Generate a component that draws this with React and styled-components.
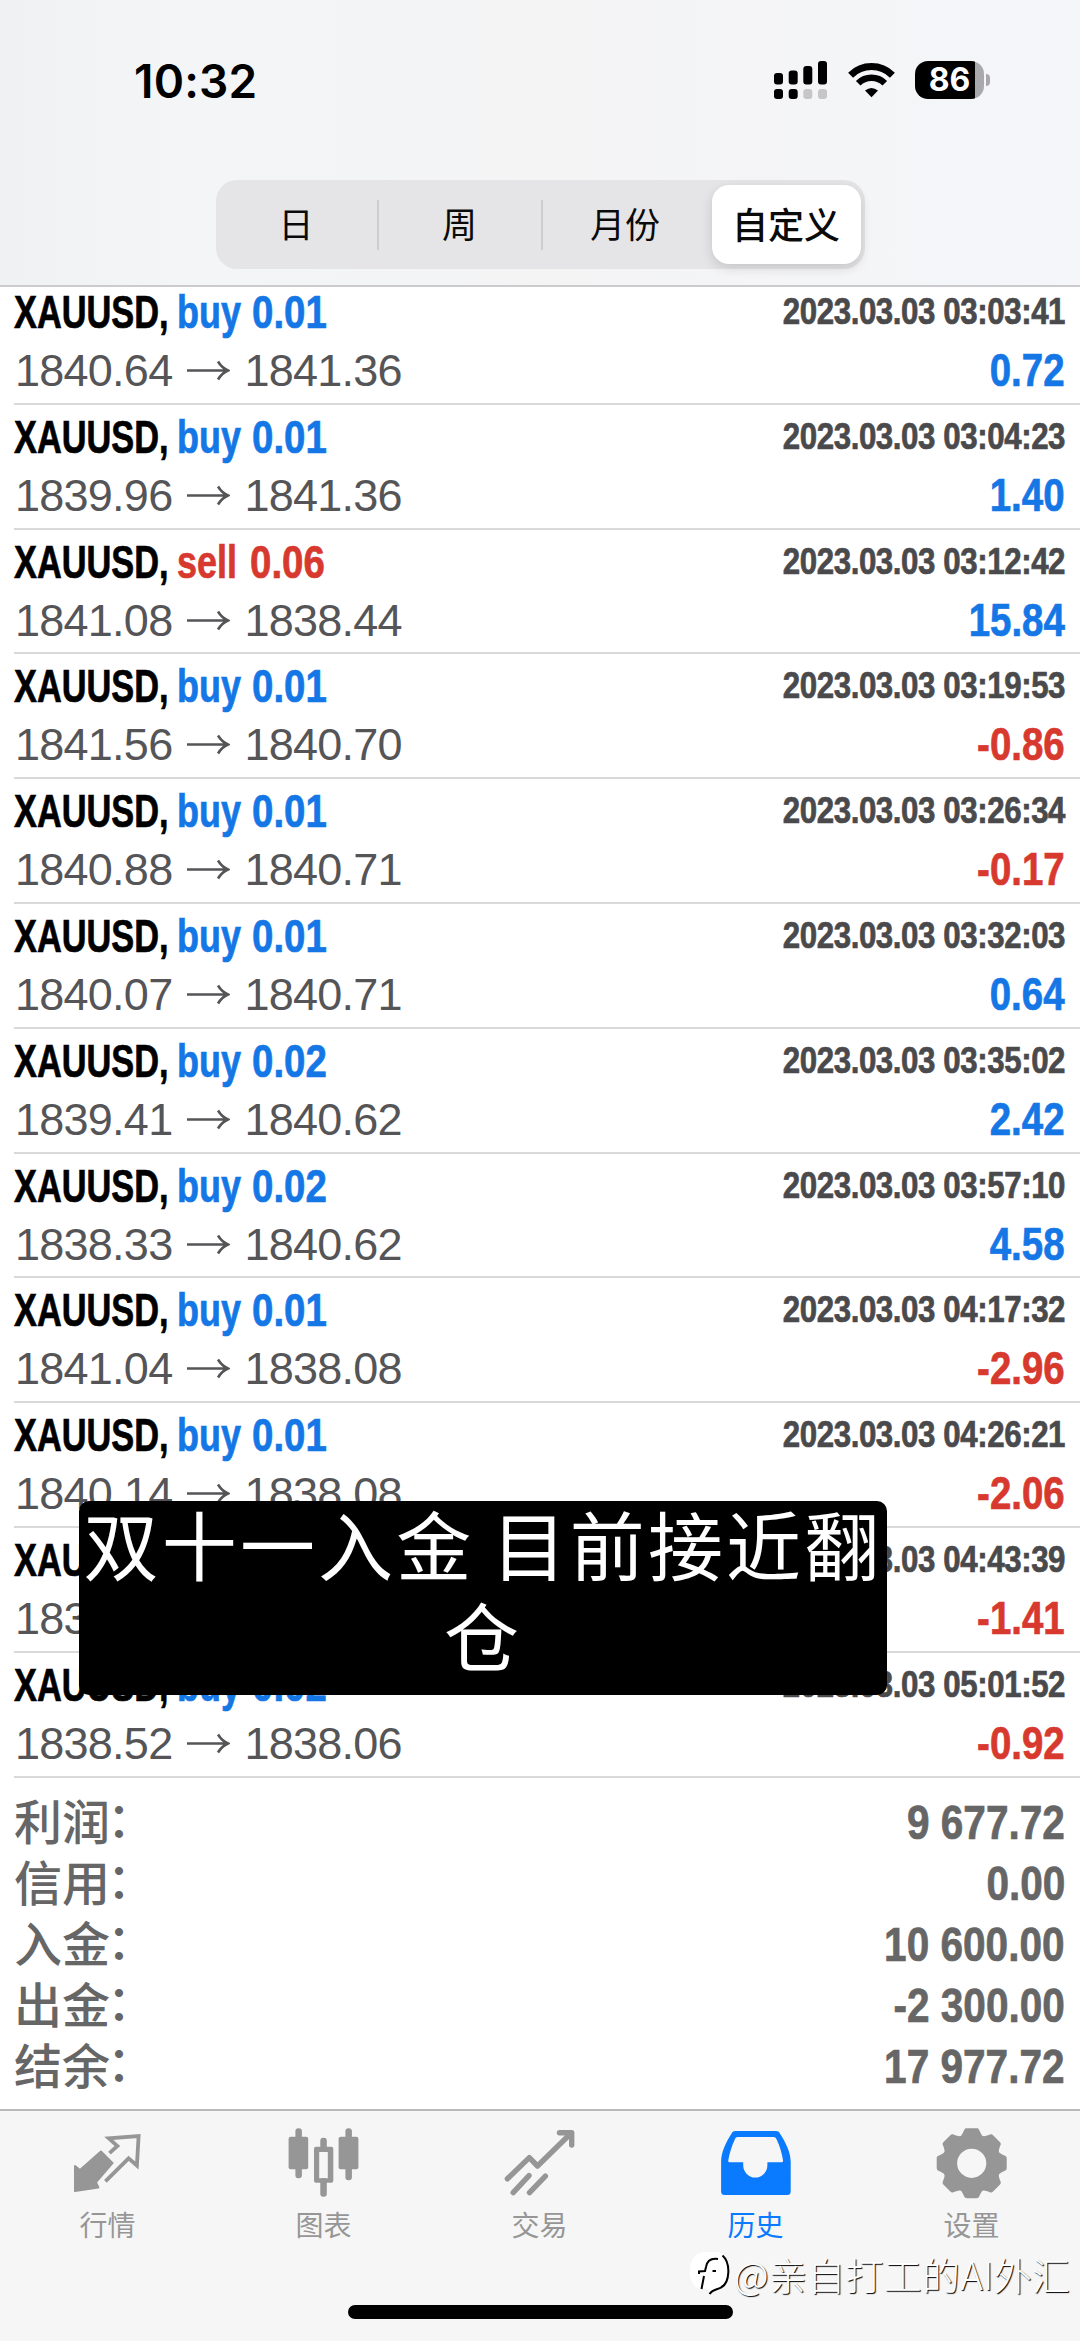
import React from "react";
import styled, { createGlobalStyle } from "styled-components";

const BLUE = "#1577e6";
const RED = "#d8392f";
const CJK = '"Noto Sans CJK SC", sans-serif';
const SANS = '"Liberation Sans", sans-serif';

const GlobalStyle = createGlobalStyle`
  * { box-sizing: border-box; }
  body { margin: 0; background: #fff; }
`;

const Screen = styled.div`
  position: relative;
  display: flex;
  flex-direction: column;
  width: 1080px;
  height: 2341px;
  overflow: hidden;
  background: #fff;
  font-family: ${SANS};
`;

const Header = styled.header`
  position: relative;
  z-index: 1;
  display: flex;
  flex-direction: column;
  align-items: center;
  flex: none;
  height: 287px;
  border-bottom: 2px solid #cbcbcd;
  background: linear-gradient(90deg, #f0f1f2 0, #f3f5f6 180px, #f4f4f5 540px, #f5f6f9 1080px);
`;

const StatusBar = styled.div`
  display: flex;
  align-items: center;
  justify-content: space-between;
  width: 100%;
  height: 180px;
  padding: 0 90px 20px 134px;
`;

const Clock = styled.span`
  padding-top: 2px;
  font: 600 46px/60px Inter, sans-serif;
  letter-spacing: 0.2px;
  color: #000;
`;

const StatusIcons = styled.div`
  display: flex;
  align-items: center;
  gap: 20px;
  height: 40px;
`;

const Battery = styled.div`
  display: flex;
  align-items: center;
  gap: 2px;
`;

const BatteryBody = styled.div`
  width: 69px;
  height: 38px;
  border-radius: 13px;
  background: linear-gradient(90deg, #000 60px, #a9a9ab 60px);
  color: #fff;
  font: 700 32px/38px Inter, sans-serif;
  text-align: center;
`;

const BatteryCap = styled.div`
  width: 4px;
  height: 12px;
  border-radius: 0 4px 4px 0;
  background: #a9a9ab;
`;

const Segments = styled.div`
  display: flex;
  align-items: center;
  width: 649px;
  height: 89px;
  border-radius: 21px;
  background: #e5e5e7;
`;

const Segment = styled.button`
  flex: 0 0 ${(p) => p.$width}px;
  height: ${(p) => (p.$active ? "79px" : "50px")};
  margin-left: ${(p) => (p.$active ? "4px" : "0")};
  padding: 0 0 4px;
  border: 0;
  border-right: ${(p) => (p.$divider ? "2px solid #cdcdd0" : "0")};
  border-radius: ${(p) => (p.$active ? "17px" : "0")};
  background: ${(p) => (p.$active ? "#fff" : "transparent")};
  box-shadow: ${(p) => (p.$active ? "0 4px 12px rgba(0,0,0,.14)" : "none")};
  color: #0a0a0a;
  font: ${(p) => (p.$active ? "500 36px/46px" : "400 35px/46px")} ${CJK};
`;

const List = styled.main`
  flex: none;
  margin-top: -7px;
`;

const Deal = styled.article`
  height: 124.8px;
  margin-left: 14px;
  padding: 3px 15px 0 0;
  border-bottom: 2px solid #d9d9db;
`;

const DealTop = styled.div`
  display: flex;
  justify-content: space-between;
  height: 60px;
  line-height: 60px;
  white-space: nowrap;
`;

const DealBottom = styled(DealTop)`
  height: 56px;
  line-height: 56px;
`;

const Condensed = styled.span`
  display: block;
  font-family: ${SANS};
  font-weight: bold;
  white-space: nowrap;
  transform: scaleX(${(p) => p.$scale || 0.845});
  transform-origin: ${(p) => (p.$right ? "right" : "left")} center;
  -webkit-text-stroke: 0.7px currentColor;
`;

const Instrument = styled.div`
  display: flex;
  font-size: 45.5px;
  line-height: 60px;
`;

const Slot = styled.div`
  width: ${(p) => p.$width}px;
  color: ${(p) => p.$color};
`;

const Time = styled(Condensed)`
  font-size: 37px;
  line-height: 58px;
  letter-spacing: -0.5px;
  color: #4a4a4c;
`;

const Prices = styled.span`
  display: flex;
  padding-left: 1px;
  font-size: 45px;
  letter-spacing: -0.75px;
  color: #555558;
`;

const Arrow = styled.svg`
  width: 44px;
  height: 56px;
  margin: 0 14px 0 14px;
`;

const Profit = styled(Condensed)`
  font-size: 45.5px;
  line-height: 56px;
  color: ${(p) => (p.$loss ? RED : BLUE)};
`;

const Summary = styled.section`
  flex: none;
  height: 331.2px;
  padding: 14.5px 15px 0 14px;
`;

const SummaryRow = styled.div`
  display: flex;
  justify-content: space-between;
  height: 61px;
  color: #666;
`;

const SummaryLabel = styled.span`
  margin-top: -3px;
  font: 500 48px/61px ${CJK};
`;

const Colon = styled.span`
  margin-left: -15px;
  font-family: "Noto Sans CJK JP", sans-serif;
`;

const SummaryValue = styled(Condensed)`
  font-size: 48px;
  line-height: 61px;
`;

const TabBar = styled.nav`
  display: flex;
  flex: 1;
  border-top: 2px solid #b9b9b9;
  background: #f6f6f6;
`;

const Tab = styled.button`
  display: flex;
  flex: 1;
  flex-direction: column;
  align-items: center;
  padding: 13px 0 0;
  border: 0;
  background: none;
  color: ${(p) => (p.$active ? "#0a7aff" : "#969696")};
`;

const TabIcon = styled.svg`
  display: block;
  width: 76px;
  height: 76px;
`;

const TabLabel = styled.span`
  margin: 4px 1px 0 0;
  font: 400 28px/40px ${CJK};
`;

const HomeIndicator = styled.div`
  position: absolute;
  left: 348px;
  bottom: 22px;
  width: 385px;
  height: 14px;
  border-radius: 7px;
  background: #000;
`;

const Caption = styled.div`
  position: absolute;
  top: 1501px;
  left: 79px;
  width: 808px;
  height: 194px;
  border-radius: 10px;
  background: #000;
  color: #fff;
  font: 400 75px/91px ${CJK};
  letter-spacing: 3.2px;
  text-align: center;
  white-space: nowrap;
`;

const CaptionLine = styled.div`
  margin-top: ${(p) => (p.$first ? "-4px" : "0")};
  word-spacing: -3px;
`;

const Watermark = styled.div`
  position: absolute;
  top: 2249px;
  left: 690px;
  display: flex;
  align-items: center;
  gap: 3px;
  color: #fff;
  font: 300 38px/50px ${CJK};
  letter-spacing: 0.3px;
  text-shadow: 1px 1px 1px #000;
  white-space: nowrap;
`;

const deals = [
  ["buy 0.01", "2023.03.03 03:03:41", "1840.64", "1841.36", "0.72"],
  ["buy 0.01", "2023.03.03 03:04:23", "1839.96", "1841.36", "1.40"],
  ["sell 0.06", "2023.03.03 03:12:42", "1841.08", "1838.44", "15.84"],
  ["buy 0.01", "2023.03.03 03:19:53", "1841.56", "1840.70", "-0.86"],
  ["buy 0.01", "2023.03.03 03:26:34", "1840.88", "1840.71", "-0.17"],
  ["buy 0.01", "2023.03.03 03:32:03", "1840.07", "1840.71", "0.64"],
  ["buy 0.02", "2023.03.03 03:35:02", "1839.41", "1840.62", "2.42"],
  ["buy 0.02", "2023.03.03 03:57:10", "1838.33", "1840.62", "4.58"],
  ["buy 0.01", "2023.03.03 04:17:32", "1841.04", "1838.08", "-2.96"],
  ["buy 0.01", "2023.03.03 04:26:21", "1840.14", "1838.08", "-2.06"],
  ["buy 0.01", "2023.03.03 04:43:39", "1839.47", "1838.06", "-1.41"],
  ["buy 0.02", "2023.03.03 05:01:52", "1838.52", "1838.06", "-0.92"],
];

const totals = [
  ["利润", "9 677.72"],
  ["信用", "0.00"],
  ["入金", "10 600.00"],
  ["出金", "-2 300.00"],
  ["结余", "17 977.72"],
];

const QuotesIcon = () => (
  <TabIcon viewBox="0 0 76 76">
    <path d="M5 42L10 46 30.9 27.5 42.5 39 25.9 58.3 28.4 63.4 5 67Z" fill="currentColor" stroke="currentColor" strokeWidth="2" strokeLinejoin="round" />
    <path d="M39.5 29.2L47.4 22 38.8 14.3 68.6 12 66.9 41.5 58.6 34.3 35.4 57.3" fill="none" stroke="currentColor" strokeWidth="3.8" strokeLinejoin="miter" />
  </TabIcon>
);

const ChartIcon = () => (
  <TabIcon viewBox="0 0 76 76" fill="currentColor">
    <rect x="9.4" y="4.3" width="6.5" height="50" rx="3" />
    <rect x="2.6" y="12.7" width="19.6" height="32.5" rx="2" />
    <rect x="34.3" y="13.7" width="6.5" height="12" rx="3" />
    <rect x="34.3" y="54" width="6.5" height="18.7" rx="3" />
    <path fillRule="evenodd" d="M30 22.7h15.3a2 2 0 0 1 2 2v32a2 2 0 0 1-2 2H30a2 2 0 0 1-2-2v-32a2 2 0 0 1 2-2zM33.2 28v26.3h8.6V28z" />
    <rect x="59.4" y="4.3" width="6.5" height="52" rx="3" />
    <rect x="52.6" y="12.7" width="19.8" height="32.5" rx="2" />
  </TabIcon>
);

const TradeIcon = () => (
  <TabIcon viewBox="0 0 76 76" fill="none" stroke="currentColor" strokeWidth="5.4" strokeLinecap="round" strokeLinejoin="round">
    <path d="M5.4 54.8L27.3 33.6 35.5 42 69 9.2" />
    <path d="M57.5 8.7H69.7V21" />
    <path d="M11.2 68.6L27 51.6M27.5 68.6L43.4 52.2" />
  </TabIcon>
);

const HistoryIcon = () => (
  <TabIcon viewBox="0 0 76 76">
    <path fill="currentColor" fillRule="evenodd" d="M17.5 7H58c2 0 3 .8 3.9 2.4C68 19 72.7 28 72.7 38v29.5a3.5 3.5 0 0 1-3.5 3.5H6.6a3.5 3.5 0 0 1-3.5-3.5V38C3.1 28 7.5 19 13.6 9.4 14.5 7.8 15.5 7 17.5 7zM20 13c-1.700 0-2.500.8-3.100 2.300C13.700 22 11.300 30 10.300 36.200 10.100 37.600 10.800 38.300 12 38.300H25.200V41a12.100 12.600 0 0 0 24.200 0V38.300H63.300c1.300 0 1.900-.7 1.700-2C64 30 62 22 58.500 15.300 57.800 13.800 57 13 55.500 13z" />
  </TabIcon>
);

const SettingsIcon = () => (
  <TabIcon viewBox="0 0 76 76">
    <g transform="translate(37.700 39.300)">
      <circle r="22" fill="none" stroke="currentColor" strokeWidth="14.800" />
      {[0, 45, 90, 135, 180, 225, 270, 315].map((angle) => (
        <path key={angle} transform={`rotate(${angle})`} fill="currentColor" d="M-12-26C-9.500-28.500-8.500-31-7.500-33.300-7-34.600-6-35-4.800-35H4.800C6-35 7-34.600 7.500-33.300 8.500-31 9.500-28.500 12-26Z" />
      ))}
    </g>
  </TabIcon>
);

const tabs = [
  ["行情", QuotesIcon],
  ["图表", ChartIcon],
  ["交易", TradeIcon],
  ["历史", HistoryIcon],
  ["设置", SettingsIcon],
];

const SignalIcon = () => (
  <svg width="54" height="38" viewBox="0 0 54 38">
    <rect x="0" y="12" width="9" height="11.500" rx="3" />
    <rect x="14.700" y="9.500" width="9" height="14" rx="3" />
    <rect x="29.300" y="5" width="9" height="18.500" rx="3" />
    <rect x="44" y="0" width="9" height="23.500" rx="3" />
    <rect x="0" y="28" width="9" height="10" rx="3" />
    <rect x="14.700" y="28" width="9" height="10" rx="3" />
    <rect x="29.300" y="28" width="9" height="10" rx="3" fill="#c6c6c8" />
    <rect x="44" y="28" width="9" height="10" rx="3" fill="#c6c6c8" />
  </svg>
);

const WifiIcon = () => (
  <svg width="47" height="38" viewBox="0 0 47 38" fill="none" stroke="#000">
    <path d="M2.600 14.200A29.600 29.600 0 0 1 44.400 14.200" strokeWidth="7" />
    <path d="M10.200 22.200A18.800 18.800 0 0 1 36.800 22.200" strokeWidth="6.500" />
    <path d="M23.500 36.200L17 29.600Q23.500 24.200 30 29.600Z" fill="#000" stroke="none" />
  </svg>
);

const WatermarkLogo = () => (
  <svg width="41" height="46" viewBox="0 0 41 46">
    <path d="M14 1H26C35 2 39 8 39 18 39 29 35 36 27 38L19 43 20 38H13C4 38 0 31 0 20 0 9 5 2 14 1Z" fill="#fff" />
    <path d="M32.500 4.500C41 12 40 32 31 36.500 27 39 23 38 19.500 43" fill="none" stroke="#000" strokeWidth="2" />
    <path d="M28 8C21 7 17 10 16 16L15 20 9 20.500V23M14 25L11.500 38M22.500 20H26" fill="none" stroke="#000" strokeWidth="2" />
  </svg>
);

export default function App() {
  return (
    <Screen>
      <GlobalStyle />
      <Header>
        <StatusBar>
          <Clock>10:32</Clock>
          <StatusIcons>
            <SignalIcon />
            <WifiIcon />
            <Battery>
              <BatteryBody>86</BatteryBody>
              <BatteryCap />
            </Battery>
          </StatusIcons>
        </StatusBar>
        <Segments>
          <Segment $width={163} $divider>日</Segment>
          <Segment $width={164} $divider>周</Segment>
          <Segment $width={165}>月份</Segment>
          <Segment $width={149} $active>自定义</Segment>
        </Segments>
      </Header>
      <List>
        {deals.map(([order, time, open, close, profit]) => {
          const [side, lots] = order.split(" ");
          const color = side === "sell" ? RED : BLUE;
          return (
            <Deal key={time}>
              <DealTop>
                <Instrument>
                  <Slot $width={163} $color="#000">
                    <Condensed $scale={0.755}>XAUUSD,</Condensed>
                  </Slot>
                  <Slot $width={side === "sell" ? 72.5 : 75} $color={color}>
                    <Condensed $scale={0.79}>{side}</Condensed>
                  </Slot>
                  <Slot $width={76} $color={color}>
                    <Condensed>{lots}</Condensed>
                  </Slot>
                </Instrument>
                <Time $right>{time}</Time>
              </DealTop>
              <DealBottom>
                <Prices>
                  {open}
                  <Arrow viewBox="0 0 44 56" fill="none" stroke="currentColor" strokeWidth="2.6">
                    <path d="M1 27.500H42M32 18.500Q36 25 42 27.500Q36 30 32 36.500" />
                  </Arrow>
                  {close}
                </Prices>
                <Profit $right $loss={profit.startsWith("-")}>{profit}</Profit>
              </DealBottom>
            </Deal>
          );
        })}
      </List>
      <Summary>
        {totals.map(([label, value]) => (
          <SummaryRow key={label}>
            <SummaryLabel>
              {label}
              <Colon lang="ja">：</Colon>
            </SummaryLabel>
            <SummaryValue $right>{value}</SummaryValue>
          </SummaryRow>
        ))}
      </Summary>
      <TabBar>
        {tabs.map(([label, Icon]) => (
          <Tab key={label} $active={label === "历史"}>
            <Icon />
            <TabLabel>{label}</TabLabel>
          </Tab>
        ))}
      </TabBar>
      <HomeIndicator />
      <Caption>
        <CaptionLine $first>双十一入金 目前接近翻</CaptionLine>
        <CaptionLine>仓</CaptionLine>
      </Caption>
      <Watermark>
        <WatermarkLogo />
        @亲自打工的AI外汇
      </Watermark>
    </Screen>
  );
}
